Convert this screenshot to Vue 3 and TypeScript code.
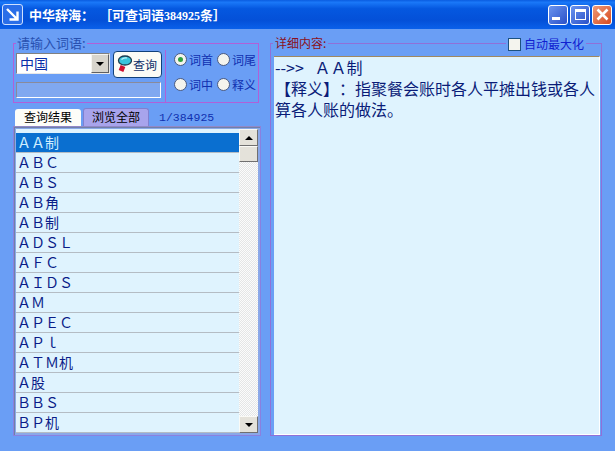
<script setup lang="ts">
const words: string[] = [
  'ＡＡ制', 'ＡＢＣ', 'ＡＢＳ', 'ＡＢ角', 'ＡＢ制', 'ＡＤＳＬ', 'ＡＦＣ', 'ＡＩＤＳ', 'ＡＭ',
  'ＡＰＥＣ', 'ＡＰｌ', 'ＡＴＭ机', 'Ａ股', 'ＢＢＳ', 'ＢＰ机',
];
</script>

<template>
  <div class="window">
    <header class="titlebar">
      <span class="app-icon">
        <svg width="19" height="19" viewBox="0 0 19 19" fill="none">
          <path d="M4 4L14 14M14.5 6.5V14.5H6.5" stroke="#fff" stroke-width="2.4" />
        </svg>
      </span>
      <span class="title">中华辞海：</span>
      <span class="title title-sub">［可查词语<span class="title-num">384925</span>条］</span>
      <div class="win-buttons">
        <span class="win-btn"><i class="glyph-min" /></span>
        <span class="win-btn"><i class="glyph-max" /></span>
        <span class="win-btn close">
          <svg width="13" height="13" viewBox="0 0 13 13"><path d="M1.5 1.5L11.5 11.5M11.5 1.5L1.5 11.5" stroke="#fff" stroke-width="2.6" /></svg>
        </span>
      </div>
    </header>

    <main class="body">
      <section class="left">
        <fieldset class="search">
          <legend>请输入词语:</legend>
          <div class="search-left">
            <div class="search-row">
              <div class="combo">
                <span class="combo-text">中国</span>
                <span class="combo-btn"><i class="arrow-down" /></span>
              </div>
              <button type="button" class="query">
                <svg width="15" height="19" viewBox="0 0 15 19">
                  <path d="M6 11L4 16" stroke="#d01030" stroke-width="5" />
                  <ellipse cx="8" cy="5.5" rx="6.5" ry="4.5" fill="#38c4dc" stroke="#1c3c50" stroke-width="1.3" />
                  <path d="M4.5 4.5Q7 2.5 10 3" stroke="#c8f4fa" stroke-width="1.2" fill="none" />
                </svg>
                <span>查询</span>
              </button>
            </div>
            <div class="status-field" />
          </div>
          <div class="radios">
            <label class="radio"><i class="dot on" />词首</label>
            <label class="radio"><i class="dot" />词尾</label>
            <label class="radio"><i class="dot" />词中</label>
            <label class="radio"><i class="dot" />释义</label>
          </div>
        </fieldset>

        <div class="tabs">
          <span class="tab plain">查询结果</span>
          <span class="tab active">浏览全部</span>
          <span class="counter">1/384925</span>
        </div>

        <div class="list-panel">
          <ul class="list">
            <li v-for="(word, i) in words" :key="word" :class="{ selected: i === 0 }">{{ word }}</li>
          </ul>
          <div class="scrollbar">
            <span class="sb-btn"><i class="arrow-up" /></span>
            <span class="sb-thumb" />
            <span class="sb-track" />
            <span class="sb-btn"><i class="arrow-down" /></span>
          </div>
        </div>
      </section>

      <section class="right">
        <div class="detail-frame">
          <span class="detail-label">详细内容:</span>
          <label class="auto-max"><i class="check" />自动最大化</label>
          <div class="detail">
            <p>--&gt;&gt;&nbsp;&nbsp;&nbsp;ＡＡ制</p>
            <p>【释义】：指聚餐会账时各人平摊出钱或各人算各人账的做法。</p>
          </div>
        </div>
      </section>
    </main>
  </div>
</template>

<style scoped>
.window {
  width: 615px;
  height: 451px;
  overflow: hidden;
  display: flex;
  flex-direction: column;
  background: #6a9ef5;
  font-family: "Noto Sans CJK SC", "Liberation Sans", sans-serif;
  text-spacing-trim: space-all;
}

.titlebar {
  height: 29px;
  flex-shrink: 0;
  display: flex;
  align-items: center;
  padding: 0 2px;
  background: linear-gradient(180deg, #0a5ce0 0%, #1a78f8 8%, #0558e0 30%, #0450d8 70%, #0a60ea 100%);
  color: #fff;
}

.app-icon {
  width: 19px;
  height: 19px;
  margin-right: 6px;
  border: 1px solid #cfe0ff;
  border-radius: 3px;
  background: #2a6ee8;
  display: flex;
  align-items: center;
  justify-content: center;
}

.title {
  font-size: 13px;
  font-weight: 700;
  white-space: pre;
}

.title-sub {
  margin-left: 5px;
}

.title-num {
  font-family: "Liberation Serif", serif;
  font-size: 12px;
}

.win-buttons {
  margin-left: auto;
  margin-right: 1px;
  display: flex;
  gap: 2px;
}

.win-btn {
  width: 20px;
  height: 20px;
  box-sizing: border-box;
  border: 1px solid #fff;
  border-radius: 3px;
  background: linear-gradient(135deg, #6a94ef, #2a50c8);
  display: flex;
  align-items: center;
  justify-content: center;
}

.win-btn.close {
  background: linear-gradient(135deg, #ee9a78, #d84a20);
}

.glyph-min {
  width: 8px;
  height: 3px;
  margin-top: 8px;
  margin-right: 4px;
  background: #fff;
}

.glyph-max {
  width: 11px;
  height: 11px;
  border: 1px solid #fff;
  border-top-width: 3px;
  box-sizing: border-box;
}

.body {
  flex: 1;
  display: flex;
  padding: 7px 13px 15px 13px;
  gap: 9px;
}

.left {
  width: 248px;
  display: flex;
  flex-direction: column;
}

.search {
  margin: 0;
  padding: 0 0 5px 2px;
  height: 67px;
  box-sizing: border-box;
  border: 1px solid #b060d8;
  display: flex;
  width: 246px;
}

.search legend {
  padding: 0 1px;
  margin-left: 0;
  font-size: 13px;
  line-height: 14px;
  color: #2850b0;
}

.search-left {
  width: 150px;
  padding-top: 1px;
  border-right: 1px solid #b060d8;
  box-sizing: border-box;
}

.search-row {
  display: flex;
  align-items: flex-start;
  gap: 3px;
}

.combo {
  width: 94px;
  height: 21px;
  margin-top: 2px;
  box-sizing: border-box;
  display: flex;
  background: #fff;
  border: 1px solid;
  border-color: #808080 #e8e8e8 #e8e8e8 #808080;
}

.combo-text {
  flex: 1;
  padding-left: 3px;
  font-size: 14px;
  line-height: 18px;
  color: #0a2ea8;
}

.combo-btn {
  width: 16px;
  display: flex;
  align-items: center;
  justify-content: center;
  background: #d8d5cc;
  border: 1px solid;
  border-color: #f5f5f0 #606060 #606060 #f5f5f0;
}

.arrow-down,
.arrow-up {
  width: 0;
  height: 0;
  border-left: 4px solid transparent;
  border-right: 4px solid transparent;
}

.arrow-down {
  border-top: 4px solid #000;
}

.arrow-up {
  border-bottom: 4px solid #000;
}

.query {
  width: 49px;
  height: 27px;
  padding: 0 0 0 3px;
  display: flex;
  align-items: center;
  gap: 1px;
  white-space: nowrap;
  border: 1px solid #10407a;
  border-radius: 4px;
  background: #fbfbf6;
  font: inherit;
  font-size: 12px;
  color: #10306a;
}

.query svg {
  flex-shrink: 0;
}

.status-field {
  width: 145px;
  height: 16px;
  margin-top: 4px;
  box-sizing: border-box;
  background: #80a8f0;
  border: 1px solid;
  border-color: #8a8a9a #fff #fff #8a8a9a;
}

.radios {
  flex: 1;
  padding: 2px 0 0 8px;
  display: grid;
  grid-template-columns: 43px 41px;
  grid-auto-rows: 25px;
}

.radio {
  display: flex;
  align-items: center;
  gap: 2px;
  height: 15px;
  font-size: 12px;
  color: #1030b0;
}

.dot {
  width: 13px;
  height: 13px;
  box-sizing: border-box;
  border-radius: 50%;
  border: 1px solid #4a5a80;
  background: #f4f4ee;
  position: relative;
}

.dot.on::after {
  content: "";
  position: absolute;
  inset: 3px;
  border-radius: 50%;
  background: #30a040;
}

.tabs {
  height: 18px;
  margin-top: 5px;
  padding-left: 2px;
  display: flex;
  align-items: flex-end;
  font-size: 12px;
}

.tab {
  height: 17px;
  text-align: center;
  line-height: 16px;
  color: #000;
  border-radius: 3px 3px 0 0;
}

.tab.plain {
  width: 66px;
  background: #fdfdf8;
}

.tab.active {
  width: 66px;
  height: 18px;
  margin-left: 2px;
  background: #a8a4ec;
  border: 1px solid #8080d0;
  border-bottom: 0;
  box-sizing: border-box;
}

.counter {
  margin-left: 10px;
  align-self: center;
  font-family: "Liberation Mono", monospace;
  font-size: 11.5px;
  color: #1030b0;
}

.list-panel {
  width: 248px;
  flex: 1;
  min-height: 0;
  box-sizing: border-box;
  display: flex;
  padding: 2px;
  border: 1px solid #8a80e0;
  border-top-color: #9088c8;
  background: #8aa8e8;
  box-shadow: inset 1px 1px 0 #7080a8;
}

.list {
  margin: 0;
  padding: 4px 0 0;
  list-style: none;
  width: 224px;
  background: #dff3fe;
  overflow: hidden;
}

.list li {
  height: 20px;
  box-sizing: border-box;
  padding-left: 1px;
  border-bottom: 1px solid #b4bcc4;
  font-size: 14px;
  line-height: 19px;
  color: #0a1c88;
}

.list li.selected {
  background: #0a6fd0;
  color: #cfeeff;
}

.scrollbar {
  width: 19px;
  display: flex;
  flex-direction: column;
  background: repeating-conic-gradient(#e4e6e6 0 25%, #fbfcfc 0 50%) 0 0 / 2px 2px;
}

.sb-btn {
  height: 17px;
  flex-shrink: 0;
  box-sizing: border-box;
  display: flex;
  align-items: center;
  justify-content: center;
  background: #e4e2da;
  border: 1px solid;
  border-color: #fafaf6 #707070 #707070 #fafaf6;
}

.sb-thumb {
  height: 16px;
  flex-shrink: 0;
  box-sizing: border-box;
  background: #e4e2da;
  border: 1px solid;
  border-color: #fafaf6 #707070 #707070 #fafaf6;
}

.sb-track {
  flex: 1;
}

.right {
  flex: 1;
  display: flex;
  padding-top: 7px;
}

.detail-frame {
  position: relative;
  flex: 1;
  padding: 12px 1px 0 3px;
  display: flex;
  box-sizing: border-box;
  border: 1px solid #9070d8;
}

.detail-label {
  position: absolute;
  left: 2px;
  top: -8px;
  padding: 0 2px;
  background: #6a9ef5;
  font-size: 12px;
  line-height: 14px;
  color: #8a1020;
}

.auto-max {
  position: absolute;
  right: 15px;
  top: -8px;
  padding: 0 2px;
  display: flex;
  align-items: center;
  gap: 3px;
  background: #6a9ef5;
  font-size: 12px;
  line-height: 16px;
  color: #1020d0;
}

.check {
  width: 13px;
  height: 13px;
  box-sizing: border-box;
  background: #f4f4ee;
  border: 1px solid #1c5180;
}

.detail {
  flex: 1;
  padding: 0 1px;
  box-sizing: border-box;
  background: #dff3fe;
  border-top: 1px solid #a08860;
  border-right: 1px solid #fff;
  border-bottom: 1px solid #fff;
  font-size: 16px;
  line-height: 21px;
  color: #0a1c78;
}

.detail p {
  margin: 0;
}
</style>

<style>
html,
body {
  margin: 0;
  background: #6a9ef5;
}
</style>
